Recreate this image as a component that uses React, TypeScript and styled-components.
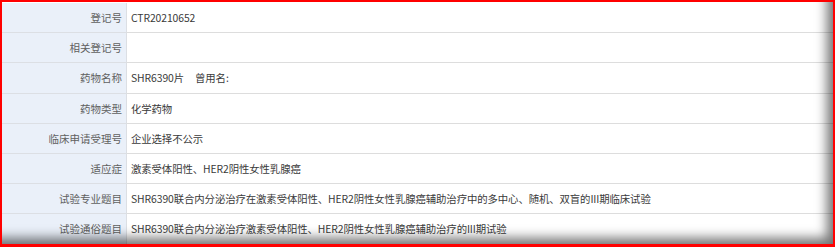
import styled, { createGlobalStyle } from 'styled-components';

const GlobalStyle = createGlobalStyle`
  html, body {
    margin: 0;
    padding: 0;
    background: #ffffff;
  }
  body {
    font-family: "Noto Sans CJK SC", "Noto Sans", sans-serif;
  }
`;

const Frame = styled.div`
  position: relative;
  width: 835px;
  height: 247px;
  box-sizing: border-box;
  border: 2px solid #ff0000;
  border-bottom-width: 3px;
  overflow: hidden;
  background: #ffffff;
  &::after {
    content: '';
    position: absolute;
    inset: 0;
    pointer-events: none;
    box-shadow: inset -14px -14px 12px -8px rgba(0, 0, 0, 0.55);
  }
`;

const Table = styled.div`
  display: grid;
  grid-template-columns: 125px 1fr;
  grid-auto-rows: 30.2px;
  padding-top: 1px;
`;

const Label = styled.div`
  display: flex;
  align-items: center;
  justify-content: flex-end;
  padding-right: 4px;
  background: #eaf0f9;
  border-right: 1px solid #dcdfe4;
  border-bottom: 1px solid #dcdfe4;
  color: #606060;
  font-size: 10.5px;
  white-space: nowrap;
`;

const Value = styled.div`
  display: flex;
  align-items: center;
  padding-left: 4px;
  border-bottom: 1px solid #dddddd;
  color: #3a3a3a;
  font-size: 10.4px;
  letter-spacing: -0.1px;
  white-space: nowrap;
`;

const Gap = styled.span`
  display: inline-block;
  width: 11px;
`;

const rows: { label: string; value: React.ReactNode }[] = [
  { label: '登记号', value: 'CTR20210652' },
  { label: '相关登记号', value: '' },
  {
    label: '药物名称',
    value: (
      <>
        SHR6390片<Gap />曾用名:
      </>
    ),
  },
  { label: '药物类型', value: '化学药物' },
  { label: '临床申请受理号', value: '企业选择不公示' },
  { label: '适应症', value: '激素受体阳性、HER2阴性女性乳腺癌' },
  {
    label: '试验专业题目',
    value: 'SHR6390联合内分泌治疗在激素受体阳性、HER2阴性女性乳腺癌辅助治疗中的多中心、随机、双盲的III期临床试验',
  },
  {
    label: '试验通俗题目',
    value: 'SHR6390联合内分泌治疗激素受体阳性、HER2阴性女性乳腺癌辅助治疗的III期试验',
  },
];

const App = () => {
  return (
    <>
      <GlobalStyle />
      <Frame>
        <Table>
          {rows.map((row) => (
            <>
              <Label key={row.label + '-l'}>{row.label}</Label>
              <Value key={row.label + '-v'}>{row.value}</Value>
            </>
          ))}
        </Table>
      </Frame>
    </>
  );
};

export default App;
